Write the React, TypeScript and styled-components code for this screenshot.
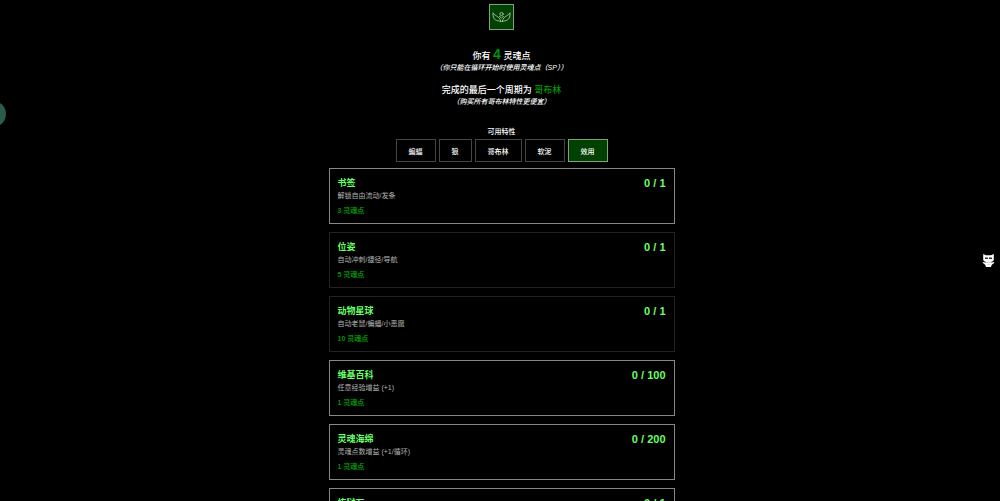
import React, { useState } from "react";
import styled, { createGlobalStyle } from "styled-components";

const Global = createGlobalStyle`
  * { box-sizing: border-box; }
  html, body { margin: 0; background: #000; }
  html { height: 100%; overflow: hidden; }
  body {
    height: 100%;
    overflow-y: auto;
    scrollbar-width: none;
    color: #fff;
    font-family: "Liberation Sans", "Noto Sans CJK SC", sans-serif;
    font-size: 7px;
  }
  #root { min-height: 100%; }
`;

const Page = styled.main`
  display: flex;
  flex-direction: column;
  align-items: center;
  padding: 4px 8px 16px 11px;
`;

const SoulButton = styled.button`
  display: flex;
  align-items: center;
  justify-content: center;
  width: 25px;
  height: 26px;
  padding: 0;
  border: 1px solid #7da37d;
  background: #004000;
`;

const Summary = styled.section`
  display: flex;
  flex-direction: column;
  gap: 10px;
  margin-top: 16px;
  text-align: center;
`;

const Lead = styled.p`
  margin: 0;
  font-size: 9px;
  line-height: 16px;
  font-weight: 500;
`;

const Note = styled.p`
  margin: 0;
  line-height: 8px;
  font-style: italic;
  font-weight: 500;
`;

const Points = styled.strong`
  color: #009600;
  font-size: 14px;
`;

const Race = styled.span`
  color: #009600;
`;

const Heading = styled.h2`
  margin: 20px 0 1px;
  font-size: 7px;
  line-height: 12px;
  font-weight: 500;
`;

const Tabs = styled.nav`
  display: flex;
  gap: 3px;
`;

const Tab = styled.button<{ $active: boolean }>`
  height: 23px;
  padding: 0 12px;
  border: 1px solid ${(p) => (p.$active ? "#7da37d" : "#444")};
  background: ${(p) => (p.$active ? "#004000" : "#000")};
  color: #fff;
  font: inherit;
  font-weight: 500;
  cursor: pointer;
`;

const List = styled.div`
  display: flex;
  flex-direction: column;
  gap: 8px;
  width: 100%;
  max-width: 346px;
  margin-top: 6px;
`;

const Card = styled.button<{ $affordable: boolean }>`
  display: flex;
  align-items: flex-start;
  justify-content: space-between;
  width: 100%;
  height: 56px;
  padding: 7px 8px;
  border: 1px solid ${(p) => (p.$affordable ? "#888" : "#222")};
  background: #000;
  color: inherit;
  font: inherit;
  text-align: left;
  cursor: pointer;
`;

const Details = styled.span`
  display: flex;
  flex-direction: column;
`;

const Name = styled.strong`
  color: #66ff66;
  font-size: 9px;
  line-height: 14px;
`;

const Effect = styled.span`
  color: #b4b4b4;
  line-height: 12px;
`;

const Cost = styled.strong`
  margin-top: 3px;
  color: #009000;
  line-height: 12px;
`;

const Level = styled.strong`
  color: #66ff66;
  font-size: 11px;
  line-height: 14px;
`;

const SideHandle = styled.button`
  position: fixed;
  top: 101px;
  left: -20px;
  width: 26px;
  height: 26px;
  padding: 0;
  border: 0;
  border-radius: 50%;
  background: #2b5c4b;
`;

const Mascot = styled.a`
  position: fixed;
  top: 253px;
  right: 4px;
  display: flex;
`;

const tabs = ["蝙蝠", "狼", "哥布林", "软泥", "效用"];

const traits = [
  { name: "书签", effect: "解锁自由流动/发条", cost: 3, max: 1 },
  { name: "位姿", effect: "自动冲刺/捷径/导航", cost: 5, max: 1 },
  { name: "动物星球", effect: "自动老鼠/蝙蝠/小恶魔", cost: 10, max: 1 },
  { name: "维基百科", effect: "任意经验增益 (+1)", cost: 1, max: 100 },
  { name: "灵魂海绵", effect: "灵魂点数增益 (+1/循环)", cost: 1, max: 200 },
  { name: "炼狱石", effect: "自动战斗", cost: 4, max: 1 },
];

const soulPoints = 4;

export default function App() {
  const [active, setActive] = useState("效用");
  return (
    <>
      <Global />
      <Page>
        <SoulButton aria-label="灵魂">
          <svg width="19" height="13" viewBox="0 0 19 13" fill="none" stroke="#a9c3a9" strokeWidth="0.9" strokeLinejoin="round" strokeLinecap="round">
            <circle cx="9.500" cy="3" r="1.600" />
            <path d="M8.800 10.500C8.300 7.500 6.500 6 4.200 4.800 2.800 4 1.800 3 1 1.800.8 5 1.500 7.500 3.400 8.900 5.200 10.200 7 9.600 8.800 10.500ZM10.200 10.500c.5-3 2.300-4.500 4.600-5.700 1.400-.8 2.400-1.800 3.200-3 .2 3.200-.5 5.700-2.400 7.100-1.800 1.300-3.600.7-5.400 1.600ZM7.500 5.500l2 1.300 2-1.300" />
          </svg>
        </SoulButton>
        <Summary>
          <div>
            <Lead>你有 <Points>{soulPoints}</Points> 灵魂点</Lead>
            <Note>（你只能在循环开始时使用灵魂点（SP））</Note>
          </div>
          <div>
            <Lead>完成的最后一个周期为 <Race>哥布林</Race></Lead>
            <Note>（购买所有哥布林特性更便宜）</Note>
          </div>
        </Summary>
        <Heading>可用特性</Heading>
        <Tabs>
          {tabs.map((t) => (
            <Tab key={t} $active={t === active} onClick={() => setActive(t)}>{t}</Tab>
          ))}
        </Tabs>
        <List>
          {traits.map((t) => (
            <Card key={t.name} $affordable={t.cost <= soulPoints}>
              <Details>
                <Name>{t.name}</Name>
                <Effect>{t.effect}</Effect>
                <Cost>{t.cost} 灵魂点</Cost>
              </Details>
              <Level>0 / {t.max}</Level>
            </Card>
          ))}
        </List>
      </Page>
      <SideHandle aria-label="展开" />
      <Mascot href="#" aria-label="吉祥物">
        <svg width="15" height="15" viewBox="0 0 15 15">
          <path d="M2.200 1 5 2.200h5L12.800 1v5.500c0 1.200-1 2-2.500 2.300l.2 1 2-.8 1 .7-2.700 2-.8 2.300H5l-.8-2.300-2.700-2 1-.7 2 .8.2-1C3.200 8.500 2.200 7.700 2.200 6.500Z" fill="#fff" />
          <path d="M4 4.600h3v1.300H4zM8 4.600h3v1.300H8z" fill="#333" />
          <path d="M4.500 9.500h6M6.500 11.500h2" stroke="#aaa" strokeWidth=".5" />
        </svg>
      </Mascot>
    </>
  );
}
